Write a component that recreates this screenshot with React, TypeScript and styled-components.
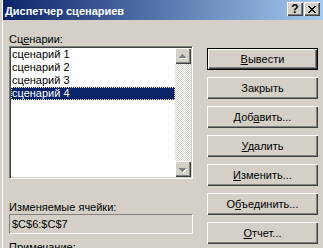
import styled, { createGlobalStyle } from "styled-components";

const GlobalStyle = createGlobalStyle`
  html, body {
    margin: 0;
    padding: 0;
    background: #d4d0c8;
  }
  body {
    font-family: "Liberation Sans", Arial, sans-serif;
    font-size: 11px;
    line-height: 13px;
    color: #000;
  }
`;

const Window = styled.div`
  margin-left: 2px;
  border-left: 1px solid #fff;
  width: 320px;
  height: 248px;
  overflow: hidden;
  background: #d4d0c8;
`;

const TitleBar = styled.div`
  height: 20px;
  display: flex;
  align-items: flex-start;
  padding: 0 3px 0 2px;
  background: linear-gradient(to right, #0a246a, #a6caf0);
`;

const TitleText = styled.div`
  flex: 1;
  margin-top: 5px;
  color: #fff;
  font-weight: bold;
  white-space: nowrap;
`;

const CaptionButton = styled.div`
  width: 16px;
  height: 14px;
  margin-top: 2px;
  margin-left: 1px;
  box-sizing: border-box;
  display: flex;
  align-items: center;
  justify-content: center;
  background: #d4d0c8;
  box-shadow: inset 1px 1px #fff, inset -1px -1px #404040,
    inset -2px -2px #808080;
  font-weight: bold;
  font-size: 12px;
  line-height: 14px;
`;

const Body = styled.div`
  display: flex;
  gap: 14px;
  padding: 13px 0 0 6px;
`;

const LeftColumn = styled.div`
  width: 184px;
  display: flex;
  flex-direction: column;
`;

const Label = styled.div<{ $gap?: number }>`
  height: 13px;
  margin-top: ${(p) => p.$gap ?? 0}px;
  white-space: nowrap;
`;

const Key = styled.span`
  text-decoration: underline;
`;

const ListBox = styled.div`
  height: 133px;
  box-sizing: border-box;
  display: flex;
  background: #fff;
  border-style: solid;
  border-width: 1px;
  border-color: #808080 #fff #fff #808080;
  box-shadow: inset 1px 1px #404040, inset -1px -1px #d4d0c8;
  padding: 1px;
`;

const Items = styled.div`
  flex: 1;
`;

const Item = styled.div<{ $selected?: boolean }>`
  height: 13px;
  padding-left: 1px;
  box-sizing: border-box;
  white-space: nowrap;
  background: ${(p) => (p.$selected ? "#0a246a" : "transparent")};
  color: ${(p) => (p.$selected ? "#fff" : "#000")};
  outline: ${(p) => (p.$selected ? "1px dotted #f3e4a8" : "none")};
  outline-offset: -1px;
`;

const ScrollBar = styled.div`
  width: 16px;
  display: flex;
  flex-direction: column;
`;

const ScrollButton = styled.div`
  width: 16px;
  height: 16px;
  background: #d4d0c8;
  box-shadow: inset 1px 1px #fff, inset -1px -1px #404040,
    inset -2px -2px #808080;
`;

const ScrollTrack = styled.div`
  flex: 1;
  background: repeating-conic-gradient(#d4d0c8 0 25%, #fff 0 50%) 0 0 / 2px
    2px;
`;

const ReadOnlyField = styled.div`
  height: 20px;
  box-sizing: border-box;
  padding: 3px 2px 0;
  border-style: solid;
  border-width: 1px;
  border-color: #808080 #fff #fff #808080;
  background: #d4d0c8;
`;

const RightColumn = styled.div`
  width: 111px;
  padding-top: 15px;
  display: flex;
  flex-direction: column;
  gap: 7px;
`;

const Button = styled.button<{ $default?: boolean }>`
  width: 111px;
  height: 22px;
  padding: 0;
  box-sizing: border-box;
  background: #d4d0c8;
  border: ${(p) => (p.$default ? "1px solid #000" : "none")};
  box-shadow: inset 1px 1px #fff, inset -1px -1px #404040,
    inset -2px -2px #808080;
  font-family: "Liberation Sans", Arial, sans-serif;
  font-size: 11px;
  line-height: 13px;
  color: #000;
`;

const Arrow = ({ up }: { up?: boolean }) => {
  const rows = up
    ? [
        [7, 6, 1],
        [6, 7, 3],
        [5, 8, 5],
        [4, 9, 7],
      ]
    : [
        [4, 7, 7],
        [5, 8, 5],
        [6, 9, 3],
        [7, 10, 1],
      ];
  return (
    <svg width="16" height="16" shapeRendering="crispEdges">
      {rows.map(([x, y, w]) => (
        <rect key={"s" + y} x={x + 1} y={y + 1} width={w} height={1} fill="#fff" />
      ))}
      {rows.map(([x, y, w]) => (
        <rect key={"a" + y} x={x} y={y} width={w} height={1} fill="#808080" />
      ))}
    </svg>
  );
};

const CloseGlyph = () => (
  <svg width="8" height="7" shapeRendering="crispEdges">
    <path
      d="M0 0h2v1h-2zM6 0h2v1h-2zM1 1h2v1h-2zM5 1h2v1h-2zM2 2h4v1h-4zM3 3h2v1h-2zM2 4h4v1h-4zM1 5h2v1h-2zM5 5h2v1h-2zM0 6h2v1h-2zM6 6h2v1h-2z"
      fill="#000"
    />
  </svg>
);

const scenarios = ["сценарий 1", "сценарий 2", "сценарий 3", "сценарий 4"];

const App = () => {
  return (
    <>
      <GlobalStyle />
      <Window>
        <TitleBar>
          <TitleText>Диспетчер сценариев</TitleText>
          <CaptionButton>?</CaptionButton>
          <CaptionButton>
            <CloseGlyph />
          </CaptionButton>
        </TitleBar>
        <Body>
          <LeftColumn>
            <Label>
              Сц<Key>е</Key>нарии:
            </Label>
            <ListBox>
              <Items>
                {scenarios.map((s, i) => (
                  <Item key={s} $selected={i === 3}>
                    {s}
                  </Item>
                ))}
              </Items>
              <ScrollBar>
                <ScrollButton>
                  <Arrow up />
                </ScrollButton>
                <ScrollTrack />
                <ScrollButton>
                  <Arrow />
                </ScrollButton>
              </ScrollBar>
            </ListBox>
            <Label $gap={22}>Изменяемые ячейки:</Label>
            <ReadOnlyField>$C$6:$C$7</ReadOnlyField>
            <Label $gap={7}>Примечание:</Label>
          </LeftColumn>
          <RightColumn>
            <Button $default>
              <Key>В</Key>ывести
            </Button>
            <Button>Закрыть</Button>
            <Button>
              Доб<Key>а</Key>вить...
            </Button>
            <Button>
              <Key>У</Key>далить
            </Button>
            <Button>
              <Key>И</Key>зменить...
            </Button>
            <Button>
              О<Key>б</Key>ъединить...
            </Button>
            <Button>
              <Key>О</Key>тчет...
            </Button>
          </RightColumn>
        </Body>
      </Window>
    </>
  );
};

export default App;
